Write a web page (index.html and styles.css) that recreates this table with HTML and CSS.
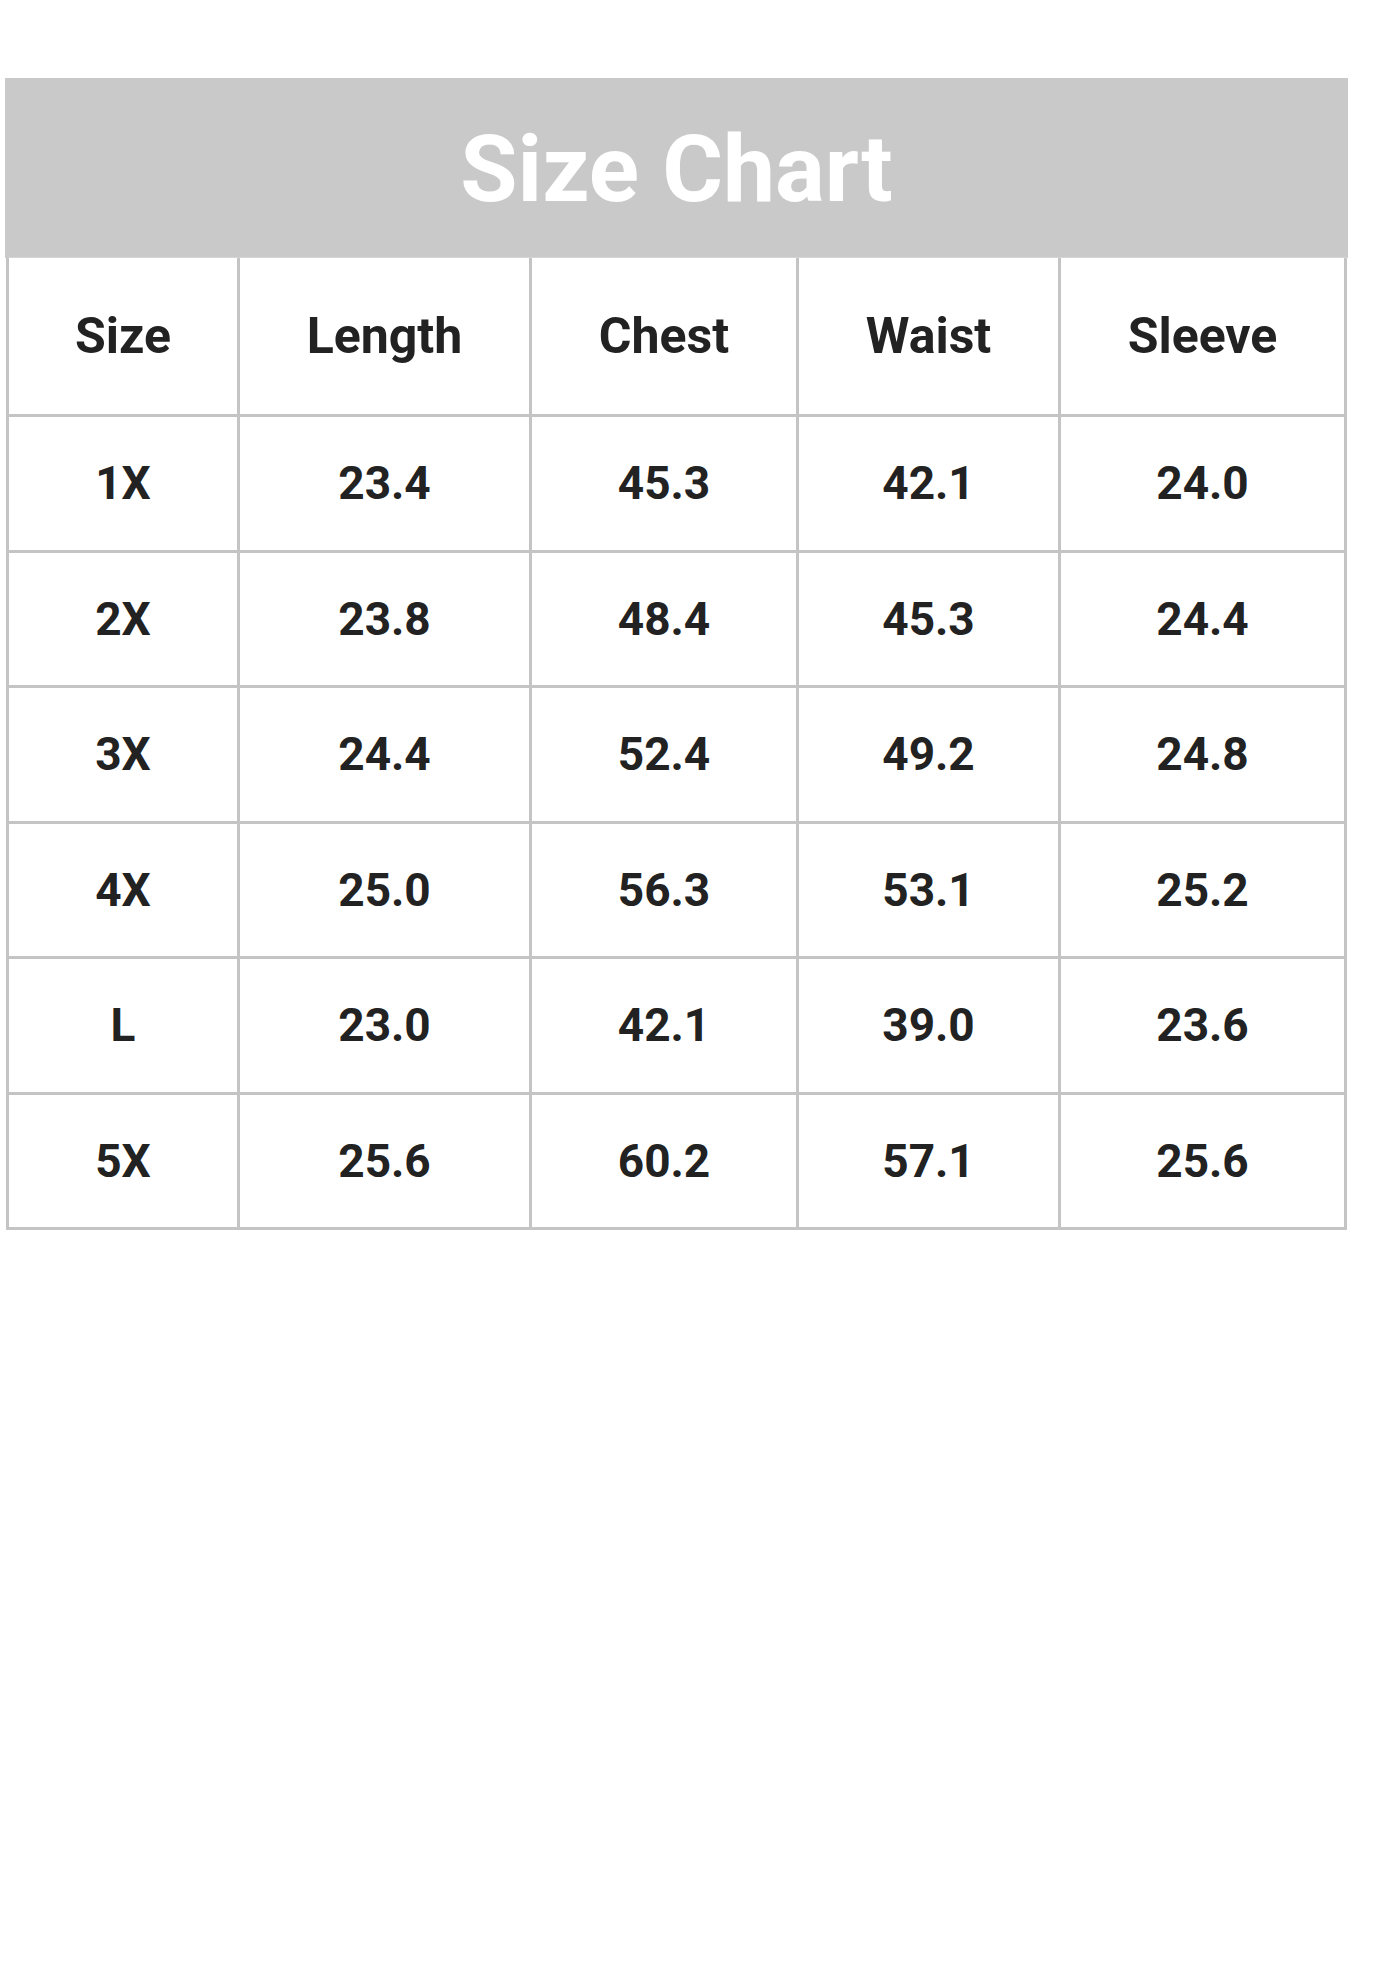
FILE: index.html
```html
<!DOCTYPE html>
<html lang="en">
<head>
<meta charset="utf-8">
<title>Size Chart</title>
<link rel="stylesheet" href="styles.css">
</head>
<body>
<div class="chart">
  <div class="band"><h1 class="title">Size Chart</h1></div>
  <div class="grid">
    <div class="cell head">Size</div>
    <div class="cell head">Length</div>
    <div class="cell head">Chest</div>
    <div class="cell head">Waist</div>
    <div class="cell head">Sleeve</div>

    <div class="cell">1X</div><div class="cell">23.4</div><div class="cell">45.3</div><div class="cell">42.1</div><div class="cell">24.0</div>
    <div class="cell">2X</div><div class="cell">23.8</div><div class="cell">48.4</div><div class="cell">45.3</div><div class="cell">24.4</div>
    <div class="cell">3X</div><div class="cell">24.4</div><div class="cell">52.4</div><div class="cell">49.2</div><div class="cell">24.8</div>
    <div class="cell">4X</div><div class="cell">25.0</div><div class="cell">56.3</div><div class="cell">53.1</div><div class="cell">25.2</div>
    <div class="cell">L</div><div class="cell">23.0</div><div class="cell">42.1</div><div class="cell">39.0</div><div class="cell">23.6</div>
    <div class="cell">5X</div><div class="cell">25.6</div><div class="cell">60.2</div><div class="cell">57.1</div><div class="cell">25.6</div>
  </div>
</div>
</body>
</html>
```

FILE: styles.css
```css
html, body {
  margin: 0;
  padding: 0;
  background: #ffffff;
}

body {
  font-family: Roboto, "Liberation Sans", Arial, sans-serif;
  color: #222222;
}

.chart {
  margin: 78px 0 0 5px;
  width: 1343px;
}

.band {
  height: 180px;
  background: #c9c9c9;
  display: flex;
  align-items: center;
  justify-content: center;
}

.title {
  margin: 0;
  font-size: 93px;
  font-weight: 700;
  color: #ffffff;
  line-height: normal;
  position: relative;
  top: 1px;
}

.grid {
  margin-left: 1px;
  width: 1341px;
  box-sizing: border-box;
  display: grid;
  grid-template-columns: 231px 292px 267px 262px 286px;
  grid-template-rows: 159px repeat(6, 135.5px);
  border-left: 3px solid #c4c4c4;
  border-top: 1px solid #d4d4d4;
  margin-top: -1px;
}

.cell {
  box-sizing: border-box;
  border-right: 3px solid #c4c4c4;
  border-bottom: 3px solid #c4c4c4;
  display: flex;
  align-items: center;
  justify-content: center;
  font-size: 46px;
  font-weight: 700;
  color: #222222;
  line-height: normal;
}

.head {
  font-size: 50px;
}
```
